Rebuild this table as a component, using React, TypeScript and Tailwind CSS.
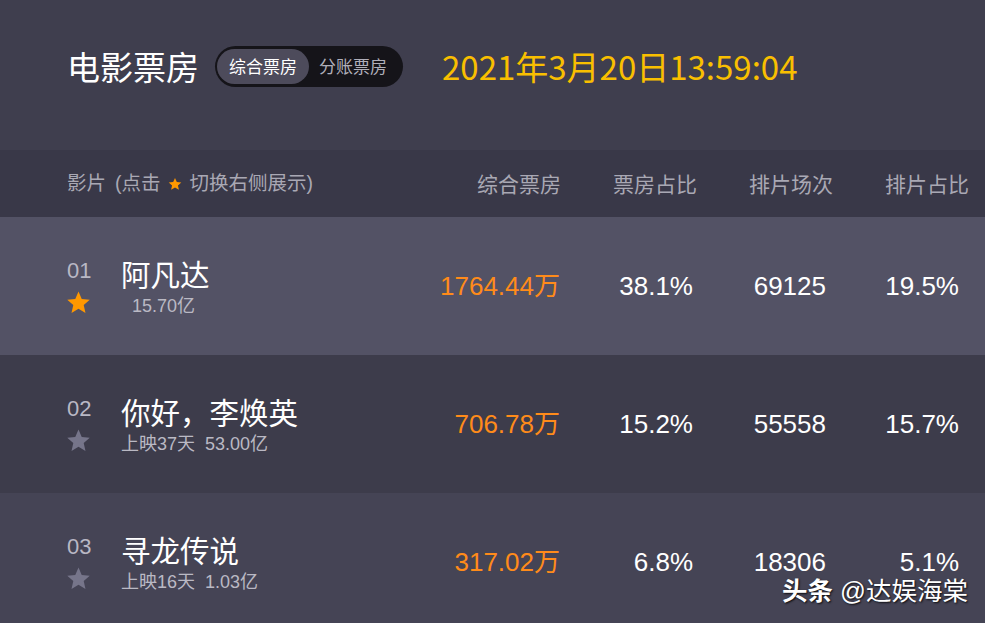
import React from "react";

const CJK = "font-['Noto_Sans_CJK_SC',sans-serif]";
const NUM = "font-['Liberation_Sans','Noto_Sans_CJK_SC',sans-serif]";

interface Movie {
  rank: string;
  title: string;
  sub: string;
  box: string;
  boxRatio: string;
  shows: string;
  showRatio: string;
  picked?: boolean;
  bg: string;
}

const movies: Movie[] = [
  {
    rank: "01",
    title: "阿凡达",
    sub: "15.70亿",
    box: "1764.44万",
    boxRatio: "38.1%",
    shows: "69125",
    showRatio: "19.5%",
    picked: true,
    bg: "bg-[#535265]",
  },
  {
    rank: "02",
    title: "你好，李焕英",
    sub: "上映37天  53.00亿",
    box: "706.78万",
    boxRatio: "15.2%",
    shows: "55558",
    showRatio: "15.7%",
    bg: "bg-[#3d3c4b]",
  },
  {
    rank: "03",
    title: "寻龙传说",
    sub: "上映16天  1.03亿",
    box: "317.02万",
    boxRatio: "6.8%",
    shows: "18306",
    showRatio: "5.1%",
    bg: "bg-[#454455]",
  },
];

function Star({ className }: { className?: string }) {
  return (
    <svg viewBox="0 0 24 24" className={className} fill="currentColor">
      <path d="M12 1.5l3.1 7.1 7.7.7-5.8 5.1 1.7 7.6L12 18l-6.7 4 1.7-7.6L1.2 9.3l7.7-.7z" />
    </svg>
  );
}

function MovieRow({ m }: { m: Movie }) {
  return (
    <div className={`h-[138px] flex items-center pl-[67px] pr-[26px] ${m.bg}`}>
      <div className="flex-1 flex items-start mt-[4px]">
        <div className="w-[54px] flex flex-col items-start">
          <span className={`${NUM} text-[22px] leading-[22px] text-[#b9b8c4]`}>{m.rank}</span>
          <Star
            className={`w-[25px] h-[25px] mt-[8px] -ml-[1px] ${m.picked ? "text-[#ff9800]" : "text-[#76758a]"}`}
          />
        </div>
        <div className="flex flex-col -mt-[6px]">
          <span className={`${CJK} text-[29.5px] leading-[38px] text-white`}>{m.title}</span>
          <span
            className={`${NUM} text-[18px] leading-[22px] text-[#bab9c4] whitespace-pre mt-[3px] ${m.picked ? "pl-[11px]" : ""}`}
          >
            {m.sub}
          </span>
        </div>
      </div>
      <div className={`${NUM} flex items-center text-[26px] leading-[30px] text-white`}>
        <span className="w-[133px] text-right text-[#ff8b1a]">{m.box}</span>
        <span className="w-[133px] text-right">{m.boxRatio}</span>
        <span className="w-[133px] text-right">{m.shows}</span>
        <span className="w-[133px] text-right">{m.showRatio}</span>
      </div>
    </div>
  );
}

export default function App() {
  return (
    <div className="relative w-[985px] h-[623px] overflow-hidden bg-[#3f3e4e]">
      <header className="h-[150px] flex items-center pl-[67px] pb-[18px]">
        <h1 className={`${CJK} text-[33px] leading-[40px] text-white`}>电影票房</h1>
        <div className="ml-[16px] h-[41px] w-[188px] rounded-full bg-[#151419] flex items-center px-[2px]">
          <span
            className={`${CJK} h-[35px] w-[92px] rounded-full bg-[#4d4b5b] flex items-center justify-center text-[17px] text-white`}
          >
            综合票房
          </span>
          <span className={`${CJK} flex-1 text-center text-[17px] text-[#b0afb9] pr-[4px]`}>分账票房</span>
        </div>
        <div className={`${CJK} ml-[39px] text-[33px] leading-[40px] text-[#f9bf00]`}>
          2021年3月20日13:59:04
        </div>
      </header>

      <div className="h-[67px] bg-[#393848] flex items-center pl-[67px] pr-[16px] text-[#a9a8b4]">
        <div className={`${NUM} flex-1 flex items-center text-[19.5px]`}>
          <span>影片</span>
          <span className="ml-[9px]">(点击</span>
          <Star className="w-[14px] h-[14px] ml-[7px] mr-[8px] text-[#ff9800]" />
          <span>切换右侧展示)</span>
        </div>
        <div className={`${CJK} flex items-center text-[21px]`}>
          <span className="w-[136px] text-right">综合票房</span>
          <span className="w-[136px] text-right">票房占比</span>
          <span className="w-[136px] text-right">排片场次</span>
          <span className="w-[136px] text-right">排片占比</span>
        </div>
      </div>

      {movies.map((m) => (
        <MovieRow key={m.rank} m={m} />
      ))}

      <div
        className={`${NUM} absolute right-[17px] bottom-[18px] text-[25.5px] leading-[28px] text-white [text-shadow:1px_1px_2px_rgba(0,0,0,0.85)]`}
      >
        <span className="font-bold">头条</span>
        <span className="ml-[7px]">@达娱海棠</span>
      </div>
    </div>
  );
}
